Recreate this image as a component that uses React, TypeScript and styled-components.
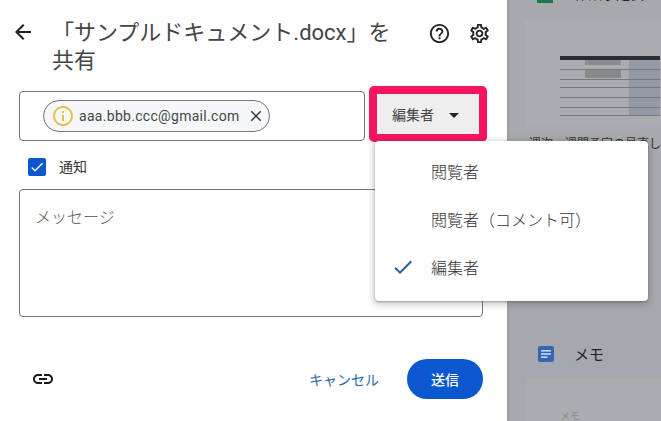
import React from "react";
import styled, { createGlobalStyle } from "styled-components";
import {
  MdArrowBack,
  MdArrowDropDown,
  MdCheck,
  MdClose,
  MdHelpOutline,
  MdInfoOutline,
  MdLink,
  MdOutlineSettings,
} from "react-icons/md";

const Global = createGlobalStyle`
  html, body { margin: 0; padding: 0; background: #fff; }
  body { font-family: Roboto, "Noto Sans CJK JP", sans-serif; }
  * { box-sizing: border-box; }
`;

const Page = styled.div`
  position: relative;
  display: flex;
  width: 661px;
  height: 421px;
  overflow: hidden;
`;

const Dialog = styled.section`
  width: 507px;
  flex: none;
  background: #fff;
  display: flex;
  flex-direction: column;
  padding: 18px 24px 0 19px;
`;

const Header = styled.header`
  display: flex;
  align-items: flex-start;
  height: 56px;
  margin-left: -8px;
`;

const HeaderIcon = styled.span`
  display: flex;
  flex: none;
  color: #1f1f1f;
  font-size: 24px;
  margin-top: 2px;
`;

const Title = styled.h1`
  margin: 1px 0 0 17px;
  width: 350px;
  flex: none;
  font: 400 22px/28px Roboto, "Noto Sans CJK JP", sans-serif;
  color: #444;
`;

const HeaderActions = styled.div`
  display: flex;
  gap: 17px;
  margin-left: 26px;
  margin-top: 4px;
`;

const ActionIcon = styled.span`
  display: flex;
  color: #262626;
  font-size: 23px;
`;

const RecipientRow = styled.div`
  display: flex;
  align-items: flex-start;
  height: 50px;
  margin-top: 17px;
`;

const RecipientBox = styled.div`
  width: 346px;
  height: 50px;
  flex: none;
  border: 1px solid #757575;
  border-radius: 4px;
  display: flex;
  align-items: center;
  padding-left: 23px;
`;

const Chip = styled.div`
  display: flex;
  align-items: center;
  width: 227px;
  height: 32px;
  border: 1px solid #777;
  border-radius: 16px;
  background: #f5f7fb;
  padding-left: 9px;
`;

const ChipInfo = styled.span`
  display: flex;
  color: #e3c34c;
  font-size: 24px;
  margin-left: -2px;
`;

const ChipText = styled.span`
  font: 400 14px/20px Roboto, sans-serif;
  color: #444746;
  margin-left: 4px;
  letter-spacing: 0.3px;
`;

const ChipClose = styled.span`
  display: flex;
  color: #3c3c3c;
  font-size: 18px;
  margin-left: 7px;
`;

const RoleButton = styled.div`
  width: 118px;
  height: 56px;
  flex: none;
  margin: -5px 0 0 4px;
  border: 8px solid #f5145f;
  border-radius: 5px;
  background: #eeeeee;
  display: flex;
  align-items: center;
  padding-left: 15px;
  font: 400 14px/20px "Noto Sans CJK JP", sans-serif;
  color: #444;
`;

const RoleCaret = styled.span`
  display: flex;
  font-size: 24px;
  color: #222;
  margin: 2px 0 0 8px;
`;

const NotifyRow = styled.label`
  display: flex;
  align-items: center;
  height: 22px;
  margin-top: 15px;
  padding-left: 9px;
`;

const Checkbox = styled.span`
  width: 18px;
  height: 18px;
  border-radius: 2px;
  background: #0b57d0;
  color: #fff;
  display: flex;
  align-items: center;
  justify-content: center;
  font-size: 16px;
`;

const NotifyLabel = styled.span`
  margin: -2px 0 0 13px;
  font: 400 14px/20px "Noto Sans CJK JP", sans-serif;
  color: #333;
`;

const MessageBox = styled.div`
  width: 464px;
  height: 128px;
  margin-top: 11px;
  border: 1px solid #757575;
  border-radius: 4px;
  padding: 14px 15px;
  font: 300 16px/24px "Noto Sans CJK JP", sans-serif;
  color: #555;
`;

const Footer = styled.footer`
  display: flex;
  align-items: center;
  height: 40px;
  margin-top: 42px;
  padding-left: 12px;
`;

const LinkIcon = styled.span`
  display: flex;
  font-size: 24px;
  color: #1a1a1a;
`;

const Cancel = styled.span`
  margin-left: auto;
  font: 400 14px/20px "Noto Sans CJK JP", sans-serif;
  color: #2a6aa8;
`;

const Send = styled.span`
  width: 76px;
  height: 40px;
  margin-left: 28px;
  border-radius: 20px;
  background: #0b57d0;
  color: #fff;
  display: flex;
  align-items: center;
  justify-content: center;
  font: 500 14px/20px "Noto Sans CJK JP", sans-serif;
`;

const Backdrop = styled.div`
  flex: 1;
  min-width: 0;
  background: #a7a9ac;
  border-left: 2px solid #9c9ea1;
  display: flex;
  flex-direction: column;
  overflow: hidden;
  padding-left: 16px;
`;

const TopCardHead = styled.div`
  flex: none;
  height: 3px;
  display: flex;
  align-items: flex-end;
  padding-left: 12px;
`;

const FileIconTop = styled.span`
  display: block;
  flex: none;
  width: 16px;
  height: 3px;
  background: #1c7a4a;
`;

const CardTitleTop = styled.span`
  flex: none;
  margin-left: 21px;
  font: 400 14px/20px "Noto Sans CJK JP", sans-serif;
  color: #222;
  white-space: nowrap;
`;

const Preview = styled.div`
  flex: none;
  height: 107px;
  margin-top: 17px;
  background: #aaacaf;
  padding: 36px 0 0 35px;
`;

const SheetSvg = styled.svg`
  display: block;
`;

const Caption = styled.div`
  flex: none;
  margin: 7px 0 0 4px;
  font: 400 12px/18px "Noto Sans CJK JP", sans-serif;
  color: #333;
  white-space: nowrap;
`;

const LowerCard = styled.div`
  flex: none;
  margin-top: 178px;
  margin-left: -4px;
  height: 91px;
  border-radius: 8px 0 0 0;
  background: #a5a9af;
  display: flex;
  flex-direction: column;
`;

const LowerHead = styled.div`
  flex: none;
  display: flex;
  align-items: center;
  height: 48px;
  padding-left: 17px;
  font: 400 15px/20px "Noto Sans CJK JP", sans-serif;
  color: #222;
`;

const LowerName = styled.span`
  margin-left: 20px;
`;

const LowerThumb = styled.div`
  flex: 1;
  margin-left: 5px;
  background: #aaacaf;
  padding: 32px 0 0 34px;
  font: 400 10px/12px "Noto Sans CJK JP", sans-serif;
  color: #8b8d90;
`;

const Menu = styled.div`
  position: absolute;
  left: 375px;
  top: 141px;
  width: 273px;
  height: 160px;
  background: #fff;
  border-radius: 4px;
  padding: 6px 0;
  box-shadow: 0 2px 6px 2px rgba(60, 64, 67, 0.25), 0 1px 2px rgba(60, 64, 67, 0.35);
`;

const MenuItem = styled.div`
  display: flex;
  align-items: center;
  height: 48px;
  padding-left: 56px;
  position: relative;
  font: 300 16px/24px "Noto Sans CJK JP", sans-serif;
  color: #333;
`;

const MenuCheck = styled.span`
  position: absolute;
  left: 16px;
  top: 12px;
  display: flex;
  font-size: 24px;
  color: #2b5c9e;
`;

const SheetThumb = () => (
  <SheetSvg width="100" height="62" viewBox="0 0 100 62" aria-hidden="true">
    <rect x="69" y="2" width="31" height="58" fill="#959ba6" />
    <rect x="25" y="4" width="36" height="5" fill="#8b8c8e" />
    <rect x="25" y="13" width="36" height="9" fill="#88898b" />
    <rect x="0" y="0" width="100" height="4" fill="#2c2d33" />
    {[13, 23, 31, 41, 51, 59].map((y) => (
      <rect key={y} x="0" y={y} width="100" height="1" fill="#77797c" />
    ))}
  </SheetSvg>
);

const DocIcon = () => (
  <svg width="16" height="16" viewBox="0 0 16 16" aria-hidden="true">
    <rect width="16" height="16" rx="2" fill="#3566b3" />
    <rect x="3" y="4" width="10" height="1.6" fill="#cdd8ea" />
    <rect x="3" y="7.2" width="10" height="1.6" fill="#cdd8ea" />
    <rect x="3" y="10.4" width="6.5" height="1.6" fill="#cdd8ea" />
  </svg>
);

export default function App() {
  return (
    <Page>
      <Global />
      <Dialog>
        <Header>
          <HeaderIcon><MdArrowBack /></HeaderIcon>
          <Title>「サンプルドキュメント.docx」を共有</Title>
          <HeaderActions>
            <ActionIcon><MdHelpOutline /></ActionIcon>
            <ActionIcon><MdOutlineSettings /></ActionIcon>
          </HeaderActions>
        </Header>
        <RecipientRow>
          <RecipientBox>
            <Chip>
              <ChipInfo><MdInfoOutline /></ChipInfo>
              <ChipText>aaa.bbb.ccc@gmail.com</ChipText>
              <ChipClose><MdClose /></ChipClose>
            </Chip>
          </RecipientBox>
          <RoleButton>
            編集者
            <RoleCaret><MdArrowDropDown /></RoleCaret>
          </RoleButton>
        </RecipientRow>
        <NotifyRow>
          <Checkbox><MdCheck /></Checkbox>
          <NotifyLabel>通知</NotifyLabel>
        </NotifyRow>
        <MessageBox>メッセージ</MessageBox>
        <Footer>
          <LinkIcon><MdLink /></LinkIcon>
          <Cancel>キャンセル</Cancel>
          <Send>送信</Send>
        </Footer>
      </Dialog>
      <Backdrop>
        <TopCardHead>
          <FileIconTop />
          <CardTitleTop>作業予定表</CardTitleTop>
        </TopCardHead>
        <Preview><SheetThumb /></Preview>
        <Caption>週次・週間予定の見直し</Caption>
        <LowerCard>
          <LowerHead>
            <DocIcon />
            <LowerName>メモ</LowerName>
          </LowerHead>
          <LowerThumb>メモ</LowerThumb>
        </LowerCard>
      </Backdrop>
      <Menu>
        <MenuItem>閲覧者</MenuItem>
        <MenuItem>閲覧者（コメント可）</MenuItem>
        <MenuItem>
          <MenuCheck><MdCheck /></MenuCheck>
          編集者
        </MenuItem>
      </Menu>
    </Page>
  );
}
